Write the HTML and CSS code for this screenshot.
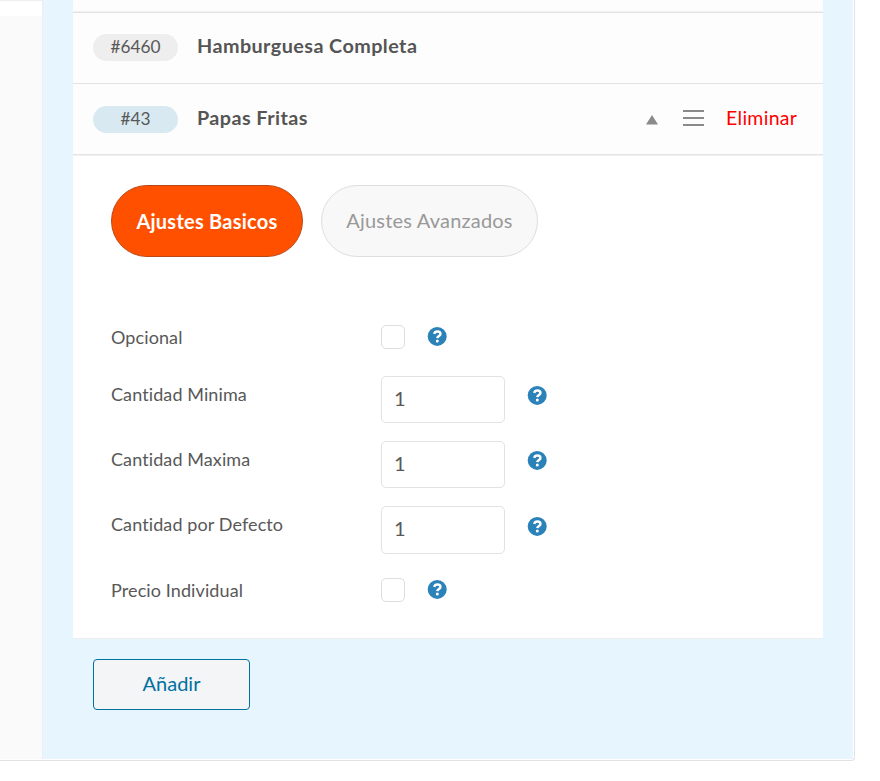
FILE: index.html
```html
<!DOCTYPE html>
<html lang="es">
<head>
<meta charset="utf-8">
<title>Productos</title>
<link rel="stylesheet" href="styles.css">
</head>
<body>
<svg class="defs" width="0" height="0" aria-hidden="true">
  <symbol id="help" viewBox="0 0 20 20">
    <circle cx="10.2" cy="10.4" r="9.5" fill="#2b82b9"/>
    <path d="M7.2 7.9C7.6 6.2 8.7 5.5 10.4 5.5C12.2 5.5 13.4 6.4 13.4 7.9C13.4 10 10.5 10 10.3 12.1" fill="none" stroke="#fff" stroke-width="2.5"/>
    <circle cx="10.3" cy="15" r="1.5" fill="#fff"/>
  </symbol>
</svg>
<div class="box">
  <aside class="tabs"></aside>
  <main class="content">
    <section class="card">
      <div class="strip"></div>
      <div class="row">
        <span class="pill">#6460</span>
        <strong class="name">Hamburguesa Completa</strong>
      </div>
      <div class="row row-open">
        <span class="pill pill-active">#43</span>
        <strong class="name">Papas Fritas</strong>
        <svg class="toggle" width="12" height="10" viewBox="0 0 12 10"><path d="M6 0L12 9.5H0Z" fill="#8a8a8a"/></svg>
        <svg class="drag" width="21" height="18" viewBox="0 0 21 18"><path d="M0 2H21M0 9H21M0 16H21" stroke="#8a8a8a" stroke-width="1.8"/></svg>
        <a class="remove">Eliminar</a>
      </div>
      <div class="settings">
        <nav class="switch">
          <button class="mode mode-active">Ajustes Basicos</button>
          <button class="mode">Ajustes Avanzados</button>
        </nav>
        <div class="field field-1"><label>Opcional</label><span class="check"></span><svg class="help"><use href="#help"/></svg></div>
        <div class="field field-2"><label>Cantidad Minima</label><span class="input">1</span><svg class="help"><use href="#help"/></svg></div>
        <div class="field field-3"><label>Cantidad Maxima</label><span class="input">1</span><svg class="help"><use href="#help"/></svg></div>
        <div class="field field-4"><label>Cantidad por Defecto</label><span class="input input-tall">1</span><svg class="help"><use href="#help"/></svg></div>
        <div class="field field-5"><label>Precio Individual</label><span class="check"></span><svg class="help"><use href="#help"/></svg></div>
      </div>
    </section>
    <button class="add">Añadir</button>
  </main>
</div>
</body>
</html>
```
FILE: styles.css
```css
* { box-sizing: border-box; }
body { margin: 0; background: #fff; color: #585858; font-family: Lato, "Open Sans", sans-serif; font-variant-ligatures: none; overflow: hidden; }
.defs { display: block; height: 0; }
button { font: inherit; padding: 0 0 1px; }
svg { display: block; flex: none; }
.box { display: flex; width: 855px; height: 761px; padding: 0 1px 1px 0; border: solid #e2e2e2; border-width: 0 1px 1px 0; border-radius: 0 0 4px 0; }
.tabs { width: 43px; border-right: 1px solid #eee; border-top: 1px solid #eee; background: linear-gradient(#fff 15px, #fafafa 15px); }
.content { flex: 1; padding: 0 30px; background: #e7f5ff; }
.card { background: #fff; height: 639px; border-bottom: 1px solid #eee; }
.strip { height: 13px; background: #fdfdfd; border-bottom: 1px solid #e3e3e3; box-shadow: inset 0 -1px #f1f1f1; }
.row { display: flex; align-items: center; height: 71px; padding: 0 26px 2px 20px; background: #fdfdfd; border-bottom: 1px solid #e3e3e3; }
.row-open { box-shadow: 0 1px #f1f1f1; padding-bottom: 0; }
.pill { display: flex; justify-content: center; width: 85px; height: 27px; margin-right: 19px; border-radius: 14px; background: #eee; font-size: 17.3px; line-height: 26px; }
.pill-active { background: #d8e9f2; }
.name { padding-bottom: 4px; font-size: 19.8px; line-height: 26px; font-weight: 700; letter-spacing: .43px; color: #555; }
.toggle { margin-left: auto; margin-top: 1px; }
.drag { margin: 0 0 2px 25px; }
.remove { width: 71px; margin: 0 0 3px 22px; color: #f00; font-size: 19.5px; letter-spacing: .3px; white-space: nowrap; }
.settings { padding: 30px 38px 0; }
.switch { display: flex; gap: 18px; height: 72px; margin-bottom: 68px; }
.mode { width: 217px; padding-bottom: 2px; border: 1px solid #dedede; border-radius: 36px; background: #f8f8f8; color: #999; font-size: 20px; letter-spacing: .2px; white-space: nowrap; }
.mode-active { width: 192px; padding-bottom: 1px; border-color: #b84816; background: #ff5000; color: #fff; font-weight: 700; letter-spacing: .25px; }
.field { display: flex; align-items: flex-start; font-size: 18px; line-height: 24px; }
.field label { width: 270px; padding-top: 6px; letter-spacing: .1px; white-space: nowrap; }
.check { width: 24px; height: 24px; border: 1px solid #ddd; border-radius: 5px; }
.input { width: 124px; height: 47px; padding-left: 12px; border: 1px solid #e2e2e2; border-radius: 5px; font-size: 20px; line-height: 43px; }
.input-tall { height: 48px; }
.help { width: 20px; height: 20px; margin: 9px 0 0 22px; }
.check + .help { margin: 1px 0 0 22px; }
.field-1 { height: 51px; }
.field-2, .field-3 { height: 65px; }
.field-4 { height: 72px; }
.field-4 .help { margin-top: 10px; }
.field-1 label, .field-5 label { padding-top: 0; }
.add { display: block; width: 157px; height: 51px; margin: 20px 0 0 20px; padding-bottom: 3px; border: 1px solid #0071a1; border-radius: 4px; background: #f3f5f6; color: #0071a1; font-size: 20px; }
```
